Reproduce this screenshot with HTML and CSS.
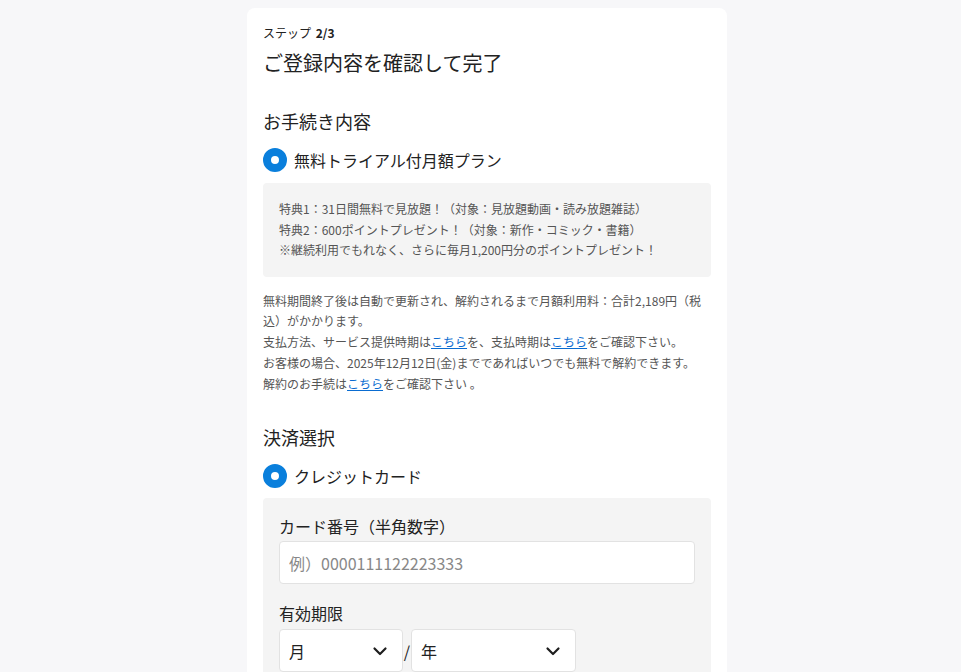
FILE: index.html
```html
<!DOCTYPE html>
<html lang="ja">
  <head>
    <meta charset="UTF-8" />
    <meta name="viewport" content="width=device-width, initial-scale=1.0" />
    <title>ご登録内容を確認して完了</title>
    <link rel="stylesheet" href="styles.css">
  </head>
  <body>
    <div class="page">
      <div class="card">

        <p class="step">ステップ <b>2/3</b></p>
        <h1 class="title">ご登録内容を確認して完了</h1>

        <h2 class="section-title">お手続き内容</h2>
        <label class="radio-row">
          <span class="radio"></span>
          <span>無料トライアル付月額プラン</span>
        </label>

        <div class="benefits">
          <p>特典1：31日間無料で見放題！（対象：見放題動画・読み放題雑誌）</p>
          <p>特典2：600ポイントプレゼント！（対象：新作・コミック・書籍）</p>
          <p>※継続利用でもれなく、さらに毎月1,200円分のポイントプレゼント！</p>
        </div>

        <p class="notice">
          無料期間終了後は自動で更新され、解約されるまで月額利用料：合計2,189円（税込）がかかります。<br>
          支払方法、サービス提供時期は<a href="#">こちら</a>を、支払時期は<a href="#">こちら</a>をご確認下さい。<br>
          お客様の場合、2025年12月12日(金)までであればいつでも無料で解約できます。<br>
          解約のお手続は<a href="#">こちら</a>をご確認下さい 。
        </p>

        <h2 class="section-title">決済選択</h2>
        <label class="radio-row">
          <span class="radio"></span>
          <span>クレジットカード</span>
        </label>

        <div class="card-form">
          <p class="field-label">カード番号（半角数字）</p>
          <input class="text-input" type="text" placeholder="例）0000111122223333">

          <p class="field-label expiry-label">有効期限</p>
          <div class="expiry">
            <div class="select month">
              <span>月</span>
              <svg width="16" height="16" viewBox="0 0 16 16"><path d="M2.5 5.5 8 11l5.5-5.5" fill="none" stroke="#1e1e1e" stroke-width="2.2" stroke-linecap="round" stroke-linejoin="round"/></svg>
            </div>
            <span class="slash">/</span>
            <div class="select year">
              <span>年</span>
              <svg width="16" height="16" viewBox="0 0 16 16"><path d="M2.5 5.5 8 11l5.5-5.5" fill="none" stroke="#1e1e1e" stroke-width="2.2" stroke-linecap="round" stroke-linejoin="round"/></svg>
            </div>
          </div>
        </div>

      </div>
    </div>
  </body>
</html>
```

FILE: styles.css
```css
*{
  margin: 0;
  padding: 0;
  box-sizing: border-box;
}

body{
  background-color: #f7f7f9;
  font-family: "Noto Sans CJK JP", "Noto Sans", sans-serif;
  color: #222;
}

.page{
  display: flex;
  justify-content: center;
  padding: 8px 0 0 13px;
}

.card{
  width: 480px;
  min-height: 700px;
  background-color: #fff;
  border-radius: 8px 8px 0 0;
  padding: 16px;
}

.step{
  font-size: 12px;
  line-height: 18px;
}

.step b{
  margin-left: 2px;
}

.title{
  font-size: 20px;
  font-weight: normal;
  line-height: 30px;
  margin-top: 6px;
}

.section-title{
  font-size: 18px;
  font-weight: normal;
  line-height: 27px;
  margin-top: 30px;
}

.radio-row{
  display: flex;
  align-items: center;
  gap: 7px;
  font-size: 16px;
  line-height: 24px;
  margin-top: 13px;
}

.radio{
  width: 24px;
  height: 24px;
  border-radius: 50%;
  border: 8px solid #0a7fdc;
  background-color: #fff;
}

.benefits{
  background-color: #f4f4f4;
  border-radius: 4px;
  margin-top: 11px;
  padding: 16px;
  font-size: 12px;
  line-height: 20.5px;
  color: #555;
}

.notice{
  margin-top: 14px;
  font-size: 12px;
  line-height: 20.75px;
  color: #555;
}

.notice a{
  color: #0a6cd1;
}

.card-form{
  background-color: #f4f4f4;
  border-radius: 4px 4px 0 0;
  margin-top: 10px;
  padding: 16px;
  min-height: 200px;
}

.field-label{
  font-size: 16px;
  line-height: 24px;
}

.text-input{
  display: block;
  width: 100%;
  height: 43px;
  margin-top: 3px;
  padding: 0 9px;
  border: 1px solid #e2e2e2;
  border-radius: 4px;
  background-color: #fff;
  font-family: inherit;
  font-size: 16px;
  color: #222;
}

.text-input::placeholder{
  color: #888;
}

.expiry-label{
  margin-top: 17px;
}

.expiry{
  display: flex;
  align-items: center;
  margin-top: 4px;
}

.select{
  display: flex;
  align-items: center;
  justify-content: space-between;
  height: 43px;
  padding: 0 14px 0 9px;
  background-color: #fff;
  border: 1px solid #e2e2e2;
  border-radius: 4px;
  font-size: 16px;
}

.month{
  width: 124px;
}

.year{
  width: 165px;
}

.slash{
  font-size: 16px;
  width: 8px;
  text-align: center;
}
```
